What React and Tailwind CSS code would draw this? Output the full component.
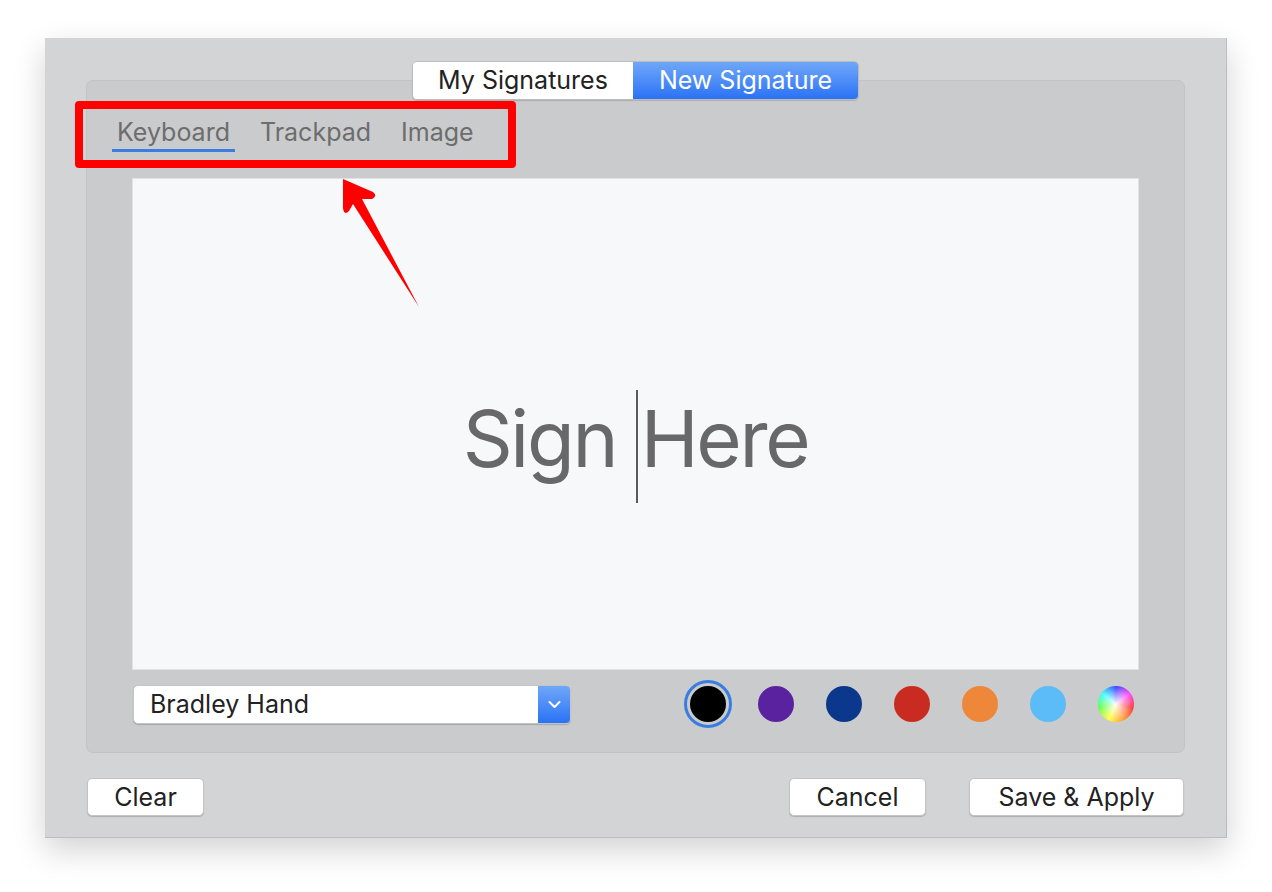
import { useState } from 'react';

const swatches = ['#000000', '#5b22a0', '#0b378c', '#c92b21', '#ee873a', '#5bbcf7'];

function Button({ children, className = '' }) {
  return (
    <button
      className={`h-[38px] rounded-[5px] bg-white text-[25px] leading-none text-[#222] border border-[#c4c4c4] shadow-[0_1px_1px_rgba(0,0,0,0.18)] ${className}`}
    >
      {children}
    </button>
  );
}

export default function App() {
  const [tab, setTab] = useState('Keyboard');
  const [color, setColor] = useState(0);

  return (
    <div
      className="relative w-[1272px] h-[892px] bg-white overflow-hidden"
      style={{ fontFamily: 'Inter, "Open Sans", sans-serif' }}
    >
      <div className="pt-[38px] pl-[45px]">
        {/* Window */}
        <div className="w-[1182px] h-[800px] bg-[#d3d4d6] border-b border-r border-[#bdbdbf] shadow-[0_12px_30px_rgba(0,0,0,0.18)] flex flex-col">
          {/* Segmented control */}
          <div className="relative z-10 flex justify-center pt-[23px]">
            <div className="flex h-[39px] rounded-[5px] border border-[#bcbcbc] shadow-[0_1px_1px_rgba(0,0,0,0.15)] overflow-hidden text-[25px] leading-none">
              <div className="w-[220px] bg-white text-[#222] flex items-center justify-center">My Signatures</div>
              <div className="w-[225px] bg-gradient-to-b from-[#6fa6f8] to-[#2a72f5] text-white flex items-center justify-center">
                New Signature
              </div>
            </div>
          </div>

          {/* Panel */}
          <div className="mx-[41px] -mt-[20px] h-[673px] rounded-[7px] bg-[#cacbcd] border border-[#c2c3c5] flex flex-col">
            {/* Tabs */}
            <div className="flex gap-[20px] pl-[25px] pt-[34px] h-[97px]">
              {['Keyboard', 'Trackpad', 'Image'].map((t) => (
                <button
                  key={t}
                  onClick={() => setTab(t)}
                  className={`h-[37px] px-[5px] text-[25px] leading-none text-[#6d6d6d] border-b-[3px] ${
                    tab === t ? 'border-[#3a7de0]' : 'border-transparent'
                  }`}
                >
                  {t}
                </button>
              ))}
            </div>

            {/* Signature area */}
            <div className="mx-[45px] h-[492px] bg-[#f7f8fa] border border-[#e2e3e5] flex items-center justify-center">
              <div className="flex items-center text-[78px] leading-none tracking-[-0.03em] text-[#68686a] mt-[30px]">
                <span>Sign&nbsp;</span>
                <span className="w-[2px] h-[113px] bg-[#5a5a5a] mr-[3px] translate-y-[7px]" />
                <span>Here</span>
              </div>
            </div>

            {/* Font & colours */}
            <div className="flex items-center mx-[46px] mt-[10px]">
              <div className="w-[438px] h-[39px] rounded-[5px] bg-white border border-[#c4c4c4] shadow-[0_1px_1px_rgba(0,0,0,0.18)] flex overflow-hidden">
                <div className="flex-1 pl-[16px] flex items-center text-[25px] leading-none text-[#222]">Bradley Hand</div>
                <div className="w-[32px] bg-gradient-to-b from-[#6fa6f8] to-[#2a72f5] flex items-center justify-center">
                  <svg width="13" height="9" viewBox="0 0 13 9" fill="none">
                    <path d="M1.5 2 L6.5 7 L11.5 2" stroke="white" strokeWidth="2" strokeLinecap="round" strokeLinejoin="round" />
                  </svg>
                </div>
              </div>
              <div className="flex-1" />
              <div className="flex items-center gap-[20px] mr-[-2px]">
                {swatches.map((c, i) => (
                  <button
                    key={c}
                    onClick={() => setColor(i)}
                    className={`w-[48px] h-[48px] rounded-full flex items-center justify-center border-[3px] ${
                      color === i ? 'border-[#3a7de0] bg-[#cacbcd]' : 'border-transparent'
                    }`}
                  >
                    <span className="w-[36px] h-[36px] rounded-full" style={{ backgroundColor: c }} />
                  </button>
                ))}
                <button className="w-[48px] h-[48px] rounded-full flex items-center justify-center">
                  <span className="w-[36px] h-[36px] rounded-full bg-[radial-gradient(circle,rgba(255,255,255,0.95),rgba(255,255,255,0)_72%),conic-gradient(#3040ff,#ff40ff,#ff3030,#ff9a30,#ffff40,#60ff40,#30ffff,#3040ff)]" />
                </button>
              </div>
            </div>
          </div>

          {/* Buttons */}
          <div className="flex items-center mx-[42px] mt-[25px]">
            <Button className="w-[117px]">Clear</Button>
            <div className="flex-1" />
            <Button className="w-[137px]">Cancel</Button>
            <Button className="w-[215px] ml-[43px]">Save &amp; Apply</Button>
          </div>
        </div>
      </div>

      {/* Annotation: red box */}
      <div className="absolute left-[75px] top-[101px] w-[441px] h-[67px] border-[8px] border-[#ff0000] rounded-[4px] pointer-events-none" />

      {/* Annotation: red arrow */}
      <svg className="absolute left-0 top-0 pointer-events-none" width="1272" height="892" viewBox="0 0 1272 892">
        <path
          d="M343 179 L373 192 Q378 196 372 199 L362 199 L419 307 L353 204 L349 211 Q344 216 343 208 Z"
          fill="#ff0000"
        />
      </svg>
    </div>
  );
}
